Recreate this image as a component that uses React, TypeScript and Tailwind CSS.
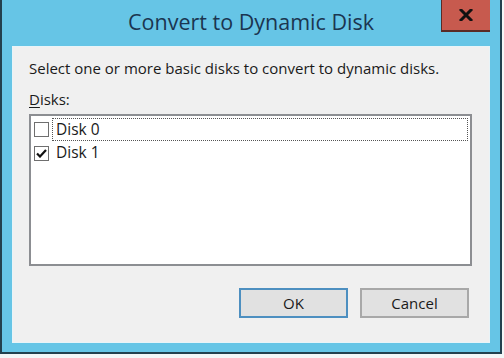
import React from "react";

export default function App() {
  const font = { fontFamily: '"Open Sans", "Noto Sans", sans-serif' };
  return (
    <div className="w-[504px] h-[358px] bg-[#f4f6f7] overflow-hidden" style={font}>
      <div className="w-[502px] h-[354px] border-x-2 border-b-2 border-[#23404e] bg-[#66c5e6] flex flex-col px-[10px] pb-[9px]">
        <div className="relative h-[46px] shrink-0 flex items-center justify-center">
          <span className="text-[21.5px] text-[#1b3550] leading-none -mt-[2px]">Convert to Dynamic Disk</span>
          <div className="absolute top-0 right-0 w-[49px] h-[32px] bg-[#c75a4e] border-b-2 border-l border-[#5a2b26] flex items-center justify-center">
            <svg width="14" height="12" viewBox="0 0 14 12">
              <path d="M2 1 L12 11 M12 1 L2 11" stroke="#111" strokeWidth="3" strokeLinecap="square" />
            </svg>
          </div>
        </div>
        <div className="flex-1 bg-[#f0f0f0] border border-[#e8f4f8] flex flex-col pl-[16px] pr-[16px]">
          <div className="mt-[12px] text-[15px] text-[#1a1a1a] leading-[18px]">
            Select one or more basic disks to convert to dynamic disks.
          </div>
          <div className="mt-[13px] text-[15px] text-[#1a1a1a] leading-[18px]">
            <span className="underline underline-offset-2">D</span>isks:
          </div>
          <div className="mt-[6px] w-[443px] h-[152px] bg-white border-2 border-[#8c8e92] pt-[2px] pl-[3px] pr-[2px]">
            <div className="flex items-center h-[23px]">
              <div className="w-[15px] h-[15px] border border-[#6f6f6f] bg-white shrink-0" />
              <div className="ml-[3px] flex-1 h-[23px] border border-dotted border-[#555] flex items-center pl-[3px] text-[15.5px] text-[#1a1a1a] leading-none">
                Disk 0
              </div>
            </div>
            <div className="flex items-center h-[24px]">
              <div className="w-[15px] h-[15px] border border-[#6f6f6f] bg-white shrink-0 flex items-center justify-center">
                <svg width="11" height="9" viewBox="0 0 11 9">
                  <path d="M1 4.5 L4 7.5 L10 1" fill="none" stroke="#111" strokeWidth="2.2" />
                </svg>
              </div>
              <div className="ml-[4px] pl-[3px] text-[15.5px] text-[#1a1a1a] leading-none">Disk 1</div>
            </div>
          </div>
          <div className="mt-[22px] flex justify-end gap-[12px] pr-[4px]">
            <button className="w-[109px] h-[30px] bg-[#e1e1e1] border-2 border-[#4d8fc0] text-[15px] text-[#1a1a1a]">OK</button>
            <button className="w-[109px] h-[30px] bg-[#e1e1e1] border-2 border-[#a8a8a8] text-[15px] text-[#1a1a1a]">Cancel</button>
          </div>
        </div>
      </div>
    </div>
  );
}
